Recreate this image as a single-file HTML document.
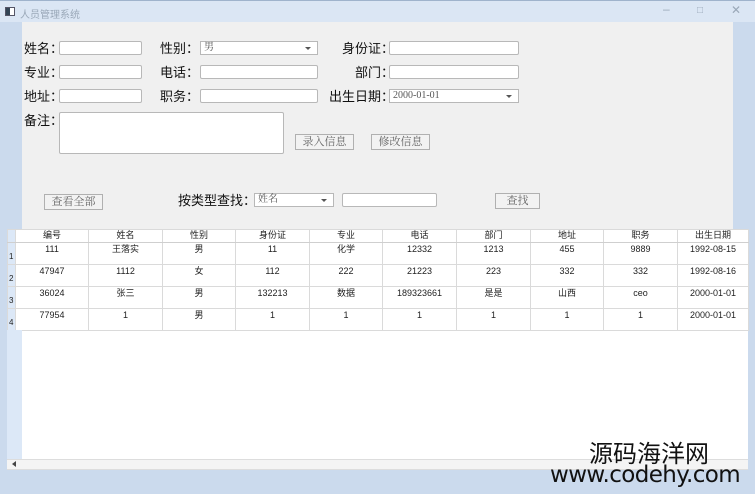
<!DOCTYPE html>
<html><head><meta charset="utf-8"><style>
*{margin:0;padding:0;box-sizing:border-box}
body{width:755px;height:494px;position:relative;overflow:hidden;background:#cbdaed;font-family:"Liberation Sans","Noto Sans CJK SC",sans-serif}
.a{position:absolute}
.title{left:0;top:0;width:755px;height:22px;background:#dbe6f4;border-top:1px solid #9fb3cc}
.title span{position:absolute;left:20px;top:5px;font-size:10px;color:#9aa8b8}
.client{left:22px;top:22px;width:711px;height:210px;background:#f0f0f0}
.lbl{font-size:13px;color:#111;position:absolute;white-space:nowrap;font-family:"Noto Sans CJK SC",sans-serif;line-height:16px}
.inp{position:absolute;background:#fff;border:1px solid #b8b8b8;height:14px;border-radius:2px}
.cb{position:absolute;background:#fff;border:1px solid #b8b8b8;height:14px;font-family:"Liberation Serif","Noto Serif CJK SC",serif;font-size:10px;color:#555;padding-left:3px;line-height:12px}
.cb:after{content:"";position:absolute;right:6px;top:5px;border:3px solid transparent;border-top:3px solid #555}
.btn{position:absolute;background:#f2f2f2;border:1px solid #b0b0b0;height:16px;font-family:"Liberation Serif","Noto Serif CJK SC",serif;font-size:11px;color:#666;text-align:center;line-height:14px}
table{position:absolute;left:7px;top:229px;border-collapse:collapse;font-size:9px;color:#222;table-layout:fixed}
td,th{height:22px;text-align:center;vertical-align:top;padding-top:1px;border:1px solid #dadada;font-weight:normal;line-height:11px}
th{height:13px;padding-top:0;background:#fff;border-bottom:1px solid #cfcfcf}
td.h,th.h{background:#dce8f7;width:8px;text-align:left;padding-left:1px;padding-top:8px;font-size:8px}
</style></head><body>
<div class="a title"><div class="a" style="left:5px;top:6px;width:10px;height:9px;border:1px solid #556;background:#fff"><div style="width:4px;height:7px;background:#345"></div></div><span>人员管理系统</span>
<span style="left:663px;top:1px;font-size:12px">–</span><span style="left:697px;top:4px;font-size:10px">□</span><span style="left:731px;top:2px;font-size:12px">✕</span></div>
<div class="a client"></div>
<div class="a" style="left:7px;top:229px;width:741px;height:231px;background:#fff"></div>
<div class="lbl" style="left:24px;top:40px">姓名：</div><div class="inp" style="left:59px;top:41px;width:83px"></div>
<div class="lbl" style="left:160px;top:40px">性别：</div><div class="cb" style="left:200px;top:41px;width:118px">男</div>
<div class="lbl" style="left:342px;top:40px">身份证：</div><div class="inp" style="left:389px;top:41px;width:130px"></div>
<div class="lbl" style="left:24px;top:64px">专业：</div><div class="inp" style="left:59px;top:65px;width:83px"></div>
<div class="lbl" style="left:160px;top:64px">电话：</div><div class="inp" style="left:200px;top:65px;width:118px"></div>
<div class="lbl" style="left:355px;top:64px">部门：</div><div class="inp" style="left:389px;top:65px;width:130px"></div>
<div class="lbl" style="left:24px;top:88px">地址：</div><div class="inp" style="left:59px;top:89px;width:83px"></div>
<div class="lbl" style="left:160px;top:88px">职务：</div><div class="inp" style="left:200px;top:89px;width:118px"></div>
<div class="lbl" style="left:329px;top:88px">出生日期：</div><div class="cb" style="left:389px;top:89px;width:130px">2000-01-01</div>
<div class="lbl" style="left:24px;top:112px">备注：</div><div class="inp" style="left:59px;top:112px;width:225px;height:42px"></div>
<div class="btn" style="left:295px;top:134px;width:59px">录入信息</div>
<div class="btn" style="left:371px;top:134px;width:59px">修改信息</div>
<div class="btn" style="left:44px;top:194px;width:59px">查看全部</div>
<div class="lbl" style="left:178px;top:192px">按类型查找：</div><div class="cb" style="left:254px;top:193px;width:80px">姓名</div>
<div class="inp" style="left:342px;top:193px;width:95px"></div>
<div class="btn" style="left:495px;top:193px;width:45px">查找</div>
<table>
<colgroup><col style="width:8px"><col style="width:73px"><col style="width:74px"><col style="width:73px"><col style="width:74px"><col style="width:73px"><col style="width:74px"><col style="width:74px"><col style="width:73px"><col style="width:74px"><col style="width:71px"></colgroup>
<tr><th class="h"></th><th>编号</th><th>姓名</th><th>性别</th><th>身份证</th><th>专业</th><th>电话</th><th>部门</th><th>地址</th><th>职务</th><th>出生日期</th></tr>
<tr><td class="h">1</td><td>111</td><td>王落实</td><td>男</td><td>11</td><td>化学</td><td>12332</td><td>1213</td><td>455</td><td>9889</td><td>1992-08-15</td></tr>
<tr><td class="h">2</td><td>47947</td><td>1112</td><td>女</td><td>112</td><td>222</td><td>21223</td><td>223</td><td>332</td><td>332</td><td>1992-08-16</td></tr>
<tr><td class="h">3</td><td>36024</td><td>张三</td><td>男</td><td>132213</td><td>数据</td><td>189323661</td><td>是是</td><td>山西</td><td>ceo</td><td>2000-01-01</td></tr>
<tr><td class="h">4</td><td>77954</td><td>1</td><td>男</td><td>1</td><td>1</td><td>1</td><td>1</td><td>1</td><td>1</td><td>2000-01-01</td></tr>
</table>
<div class="a" style="left:7px;top:330px;width:15px;height:130px;background:#dce8f7"></div>
<div class="a" style="left:7px;top:459px;width:741px;height:11px;background:#f4f4f4;border-top:1px solid #ddd;border-bottom:1px solid #ddd"></div>
<div class="a" style="left:9px;top:461px;border:3px solid transparent;border-right:4px solid #444;width:0;height:0"></div>
<div class="a" style="left:589px;top:437px;font-size:24px;color:#111;font-family:'Noto Sans CJK SC',sans-serif;line-height:30px">源码海洋网</div>
<div class="a" style="left:550px;top:462px;font-size:23px;color:#111;font-family:'DejaVu Sans',sans-serif;line-height:26px;letter-spacing:-0.6px">www.codehy.com</div>
</body></html>
